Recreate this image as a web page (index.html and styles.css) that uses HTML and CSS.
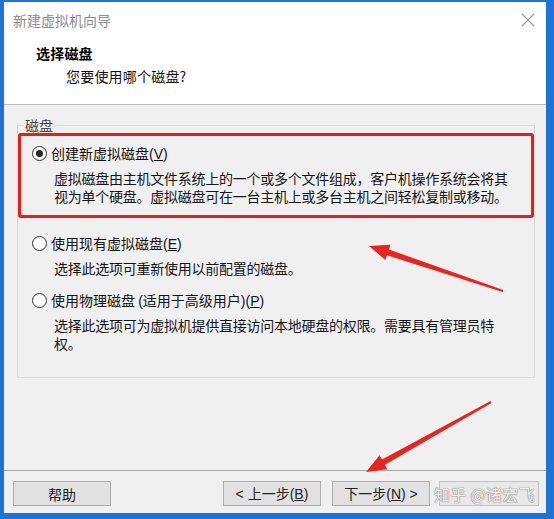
FILE: index.html
```html
<!DOCTYPE html>
<html lang="zh-CN">
<head>
<meta charset="utf-8">
<title>新建虚拟机向导</title>
<link rel="stylesheet" href="styles.css">
</head>
<body>
<div class="desktop">
  <div class="window">
    <div class="titlebar">
      <span class="title">新建虚拟机向导</span>
      <svg class="close" width="14" height="14" viewBox="0 0 14 14"><path d="M1 1 L13 13 M13 1 L1 13" stroke="#9a9a9a" stroke-width="1.1" fill="none"/></svg>
    </div>
    <div class="header">
      <div class="h-title">选择磁盘</div>
      <div class="h-sub">您要使用哪个磁盘?</div>
    </div>
    <div class="content">
      <fieldset class="group">
        <legend>磁盘</legend>
        <div class="option highlight">
          <div class="opt-row"><span class="radio checked"></span><span class="opt-label">创建新虚拟磁盘<span class="lat">(<u>V</u>)</span></span></div>
          <div class="desc"><div>虚拟磁盘由主机文件系统上的一个或多个文件组成，客户机操作系统会将其</div><div>视为单个硬盘。虚拟磁盘可在一台主机上或多台主机之间轻松复制或移动。</div></div>
        </div>
        <div class="option opt2">
          <div class="opt-row"><span class="radio"></span><span class="opt-label">使用现有虚拟磁盘<span class="lat">(<u>E</u>)</span></span></div>
          <div class="desc"><div>选择此选项可重新使用以前配置的磁盘。</div></div>
        </div>
        <div class="option opt3">
          <div class="opt-row"><span class="radio"></span><span class="opt-label">使用物理磁盘 <span class="lat">(</span>适用于高级用户<span class="lat">)(<u>P</u>)</span></span></div>
          <div class="desc"><div>选择此选项可为虚拟机提供直接访问本地硬盘的权限。需要具有管理员特</div><div>权。</div></div>
        </div>
      </fieldset>
    </div>
    <div class="footer">
      <button class="btn">帮助</button>
      <div class="spacer"></div>
      <button class="btn"><span class="lat">&lt; </span>上一步<span class="lat">(<u>B</u>)</span></button>
      <button class="btn">下一步<span class="lat">(<u>N</u>) &gt;</span></button>
      <button class="btn cancel"></button>
      <div class="watermark">知乎 @诸宏飞</div>
    </div>
  </div>
  <svg class="arrows" width="554" height="519" viewBox="0 0 554 519">
    <polygon fill="#e8241c" points="503.3,290.1 388.9,249.5 390.5,244.8 369,246 385.4,259.9 387.0,255.2 502.7,291.9"/>
    <polygon fill="#e8241c" points="490.5,401.1 382.0,459.6 379.5,455.3 366,472 387.3,469.2 384.9,464.8 491.5,402.9"/>
  </svg>
</div>
</body>
</html>
```
FILE: styles.css
```css
html, body {
  margin: 0;
  padding: 0;
}
body {
  width: 554px;
  height: 519px;
  overflow: hidden;
  background: #1b74d6;
  font-family: "Noto Sans CJK SC", "Noto Sans", sans-serif;
  font-size: 14px;
  color: #111;
}
.desktop {
  position: relative;
  width: 554px;
  height: 519px;
  padding: 2px 8px 6px 4px;
  box-sizing: border-box;
}
.window {
  width: 542px;
  height: 511px;
  background: #f0f0f0;
  display: flex;
  flex-direction: column;
}
.titlebar {
  height: 36px;
  background: #fff;
  display: flex;
  align-items: center;
  justify-content: space-between;
  padding: 0 11px 0 9px;
}
.title {
  color: #8c8c8c;
  font-size: 14px;
  line-height: 20px;
}
.close {
  display: block;
}
.header {
  background: #fff;
  padding: 5px 0 18px 32px;
  border-bottom: 1px solid #b9b9b9;
}
.h-title {
  font-weight: bold;
  line-height: 20px;
  color: #000;
  letter-spacing: 0.2px;
}
.h-sub {
  margin-top: 3px;
  padding-left: 30px;
  line-height: 20px;
  color: #111;
  letter-spacing: 0.2px;
}
.content {
  flex: 1;
  padding: 12px 11px 0 13px;
}
.group {
  margin: 0;
  padding: 0 0 25px 0;
  border: 1px solid #dadada;
  min-width: 0;
}
.group legend {
  margin-left: 6px;
  padding: 0 1px;
  line-height: 16px;
  font-size: 14px;
  color: #444;
}
.option {
  padding: 0 11px 0 14px;
}
.option.highlight {
  border: 3px solid #e3201b;
  border-radius: 3px;
  padding: 8px 8px 10px 11px;
}
.opt2 {
  padding-top: 16px;
}
.opt3 {
  padding-top: 14px;
}
.opt-row {
  display: flex;
  align-items: center;
  height: 18px;
}
.radio {
  width: 13px;
  height: 13px;
  border: 1px solid #333;
  border-radius: 50%;
  background: #fff;
  display: flex;
  align-items: center;
  justify-content: center;
  margin-right: 4px;
  flex: none;
}
.radio.checked::after {
  content: "";
  width: 7px;
  height: 7px;
  border-radius: 50%;
  background: #222;
}
.opt-label {
  line-height: 18px;
  white-space: nowrap;
}
.lat {
  font-family: "Liberation Sans", "Noto Sans", sans-serif;
  letter-spacing: 0;
}
.desc {
  margin-top: 7px;
  padding-left: 22px;
  line-height: 18px;
  white-space: nowrap;
  letter-spacing: -0.25px;
  color: #151515;
}
.footer {
  position: relative;
  border-top: 1px solid #a8a8a8;
  padding: 10px 7px 7px 9px;
  display: flex;
  gap: 11px;
}
.spacer {
  flex: 1;
}
.btn {
  width: 98px;
  height: 25px;
  margin: 0;
  padding: 0;
  background: #e1e1e1;
  border: 1px solid #adadad;
  font-family: "Noto Sans CJK SC", "Noto Sans", sans-serif;
  font-size: 14px;
  color: #222;
  line-height: 20px;
}
.btn.cancel {
  width: 100px;
  margin-left: -2px;
  background: #e8e8e8;
  border-color: #c4c4c4;
}
.watermark {
  position: absolute;
  left: 430px;
  top: 11px;
  font-size: 16px;
  line-height: 24px;
  color: rgba(255, 255, 255, 0.92);
  text-shadow: 0 0 1px #666, 0 0 1px #888;
  letter-spacing: 0.3px;
  white-space: nowrap;
}
.arrows {
  position: absolute;
  left: 0;
  top: 0;
  pointer-events: none;
}
```
